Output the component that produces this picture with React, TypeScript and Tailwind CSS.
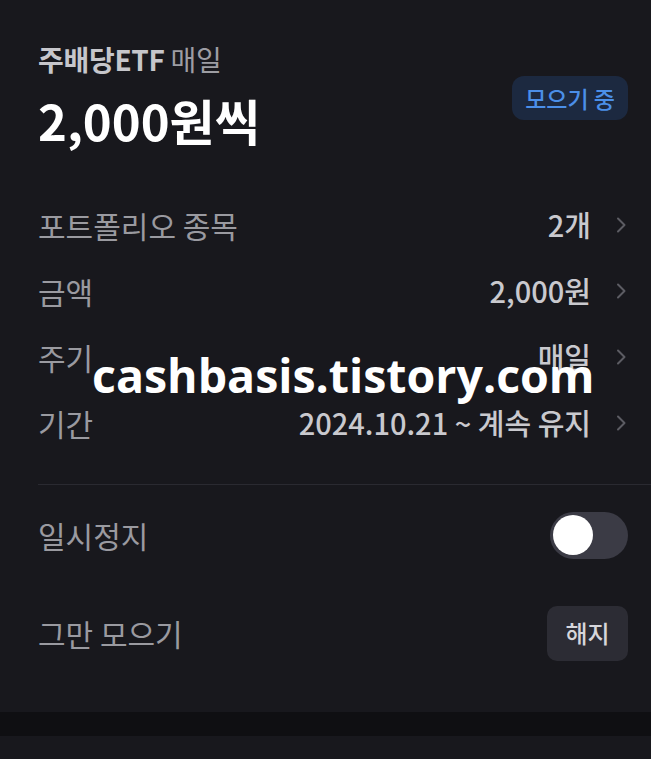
import React from "react";

// Auto-invest plan detail — dark card

const FONT = { fontFamily: '"Noto Sans CJK KR", "Noto Sans", sans-serif' };

const ROWS = [
  { label: "포트폴리오 종목", value: "2개" },
  { label: "금액", value: "2,000원" },
  { label: "주기", value: "매일" },
  { label: "기간", value: "2024.10.21 ~ 계속 유지" },
];

function Chevron() {
  return (
    <svg width="14" height="18" viewBox="0 0 14 18" fill="none" className="ml-[23px]">
      <path d="M4 2.5 L10.5 9 L4 15.5" stroke="#5c5c63" strokeWidth="2" strokeLinecap="round" strokeLinejoin="round" />
    </svg>
  );
}

export default function App() {
  return (
    <div className="relative min-h-[759px] w-full bg-[#18181d] overflow-hidden" style={FONT}>
      <div className="pl-[38px] pt-[42px]">
        {/* Header */}
        <div className="flex items-center justify-between pr-[23px]">
          <div>
            <p className="text-[28px] leading-[34px] tracking-[-0.3px]">
              <span className="font-semibold text-[#c6c6cb]">주배당ETF</span>{" "}
              <span className="text-[#9d9da3]">매일</span>
            </p>
            <p className="mt-[16px] text-[49px] leading-[56px] font-bold text-white">2,000원씩</p>
          </div>
          <span className="mt-[6px] rounded-[12px] bg-[#1c2940] px-[13px] h-[44px] flex items-center text-[23px] font-medium text-[#4b8fe8]">
            모으기 중
          </span>
        </div>

        {/* Detail rows */}
        <div className="mt-[44px] pr-[23px]">
          {ROWS.map((r) => (
            <div key={r.label} className="flex h-[66px] items-center justify-between">
              <span className="text-[30px] text-[#9a9aa0]">{r.label}</span>
              <div className="flex items-center">
                <span className="text-[29px] font-medium text-[#c9c9ce]">{r.value}</span>
                <Chevron />
              </div>
            </div>
          ))}
        </div>

        <div className="mt-[28px] border-t border-[#2a2a31]" />

        <div className="pr-[23px]">
          <div className="flex h-[100px] items-center justify-between">
            <span className="text-[30px] text-[#9a9aa0]">일시정지</span>
            <div className="flex h-[47px] w-[78px] items-center rounded-full bg-[#3b3b45] px-[3px]">
              <div className="h-[40px] w-[40px] rounded-full bg-white" />
            </div>
          </div>
          <div className="flex h-[96px] items-center justify-between">
            <span className="text-[30px] text-[#9a9aa0]">그만 모으기</span>
            <button className="flex h-[55px] w-[81px] items-center justify-center rounded-[10px] bg-[#2c2c34] text-[24px] font-medium text-[#d6d6db]">
              해지
            </button>
          </div>
        </div>
      </div>

      <div className="mt-[31px] h-[24px] bg-[#0f0f12]" />

      {/* Watermark */}
      <span
        className="absolute left-[92px] top-[345px] text-[46.5px] font-bold leading-[60px] text-white"
        style={{ fontFamily: '"Open Sans", sans-serif' }}
      >
        cashbasis.tistory.com
      </span>
    </div>
  );
}
